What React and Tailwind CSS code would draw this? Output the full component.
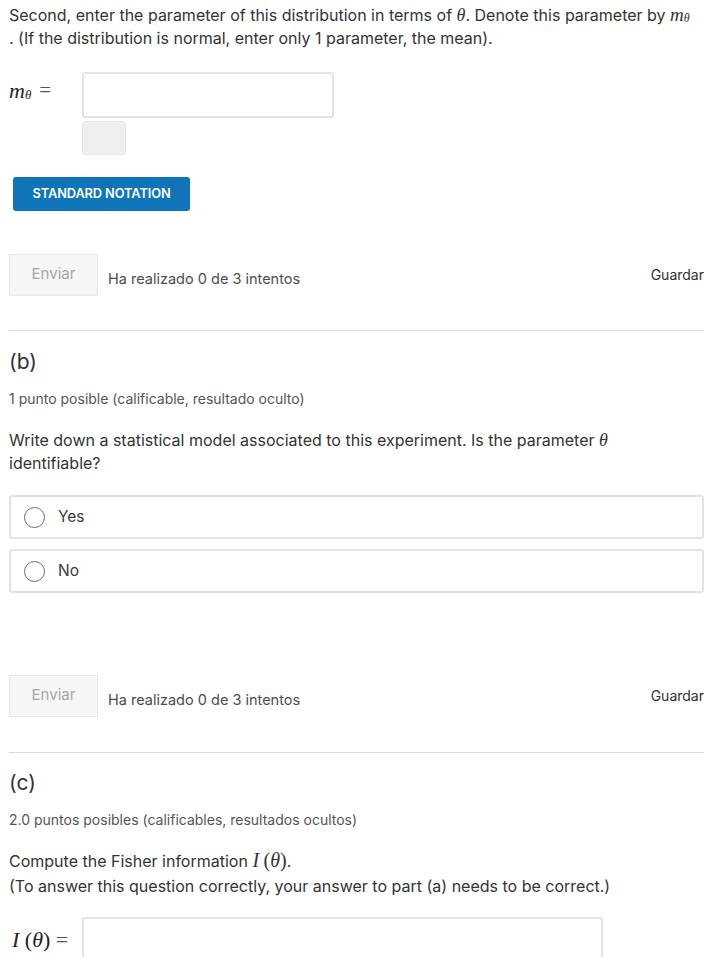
import React from "react";

const inter = { fontFamily: "Inter, 'Open Sans', sans-serif" };

function M({ children }) {
  return <span className="font-['Liberation_Serif',serif] italic">{children}</span>;
}

function MTheta({ big }) {
  return (
    <span className={"font-['Liberation_Serif',serif] italic " + (big ? "text-[22px]" : "text-[19px]")}>
      m<sub className={(big ? "text-[13px]" : "text-[12px]") + " relative top-[1px]"}>θ</sub>
    </span>
  );
}

function SubmitRow() {
  return (
    <div className="flex items-start justify-between pr-[21px]">
      <div className="flex items-center">
        <div className="w-[89px] h-[42px] bg-[#f6f6f6] border border-[#e6e6e6] text-[#a6a6a6] text-[15px] flex items-center justify-center pb-[2px]">
          Enviar
        </div>
        <span className="ml-[10px] mt-[8px] text-[14.5px] text-[#4d4d4d]">Ha realizado 0 de 3 intentos</span>
      </div>
      <span className="mt-[10px] text-[14px] text-[#313131]">Guardar</span>
    </div>
  );
}

function Radio({ label }) {
  return (
    <div className="h-[44px] border-2 border-[#e3e3e3] rounded-[3px] flex items-center pl-[13px]">
      <span className="w-[21px] h-[21px] rounded-full border border-[#6b6b6b] bg-white"></span>
      <span className="ml-[13px] text-[15.5px] text-[#3a3a3a]">{label}</span>
    </div>
  );
}

export default function App() {
  return (
    <div style={inter} className="w-[725px] h-[957px] overflow-hidden bg-white text-[#333] pl-[9px]">
      <p className="text-[16px] leading-[23px] pt-[3px] pr-[12px] text-[#333]">
        Second, enter the parameter of this distribution in terms of <M><span className="text-[18px]">θ</span></M>. Denote this parameter by <MTheta />
        <br />. (If the distribution is normal, enter only 1 parameter, the mean).
      </p>

      <div className="flex items-start mt-[22px]">
        <div className="w-[73px] pt-[2px] text-[#222] flex items-center">
          <MTheta big />
          <span className="ml-[8px] font-['Liberation_Serif',serif] text-[21px] text-[#555]">=</span>
        </div>
        <div className="flex flex-col">
          <div className="w-[252px] h-[46px] border-2 border-[#e3e3e3] rounded-[3px] bg-white"></div>
          <div className="w-[44px] h-[34px] mt-[3px] bg-[#efefef] border border-[#e6e6e6] rounded-[3px]"></div>
        </div>
      </div>

      <div className="mt-[22px] ml-[4px] w-[177px] h-[34px] bg-[#0f75b8] rounded-[3px] flex items-center justify-center text-white text-[12.8px] font-semibold tracking-[-0.1px]">
        STANDARD NOTATION
      </div>

      <div className="mt-[43px]">
        <SubmitRow />
      </div>

      <div className="mt-[34px] mr-[21px] border-t border-[#dcdcdc]"></div>

      <h2 className="mt-[17px] text-[21px] leading-[28px] text-[#333]">(b)</h2>
      <p className="mt-[12px] text-[14px] text-[#555]">1 punto posible (calificable, resultado oculto)</p>

      <p className="mt-[20px] text-[16px] leading-[23px] pr-[80px] text-[#333]">
        Write down a statistical model associated to this experiment. Is the parameter <M><span className="text-[18px]">θ</span></M> identifiable?
      </p>

      <div className="mt-[20px] mr-[21px] flex flex-col gap-[10px]">
        <Radio label="Yes" />
        <Radio label="No" />
      </div>

      <div className="mt-[82px]">
        <SubmitRow />
      </div>

      <div className="mt-[35px] mr-[21px] border-t border-[#dcdcdc]"></div>

      <h2 className="mt-[16px] text-[21px] leading-[28px] text-[#333]">(c)</h2>
      <p className="mt-[12px] text-[14px] text-[#555]">2.0 puntos posibles (calificables, resultados ocultos)</p>

      <p className="mt-[18px] text-[16px] leading-[25px] text-[#333]">
        Compute the Fisher information <M><span className="text-[20px]">I</span></M> <span className="font-['Liberation_Serif',serif] text-[20px]">(<M>θ</M>)</span>.
        <br />(To answer this question correctly, your answer to part (a) needs to be correct.)
      </p>

      <div className="flex items-start mt-[18px]">
        <div className="w-[73px] pt-[6px] pl-[3px] text-[22px] text-[#222] font-['Liberation_Serif',serif] whitespace-nowrap">
          <span className="italic">I</span> (<span className="italic">θ</span>) <span className="text-[#555]">=</span>
        </div>
        <div className="w-[521px] h-[50px] border-2 border-[#e3e3e3] rounded-[3px] bg-white"></div>
      </div>
    </div>
  );
}
